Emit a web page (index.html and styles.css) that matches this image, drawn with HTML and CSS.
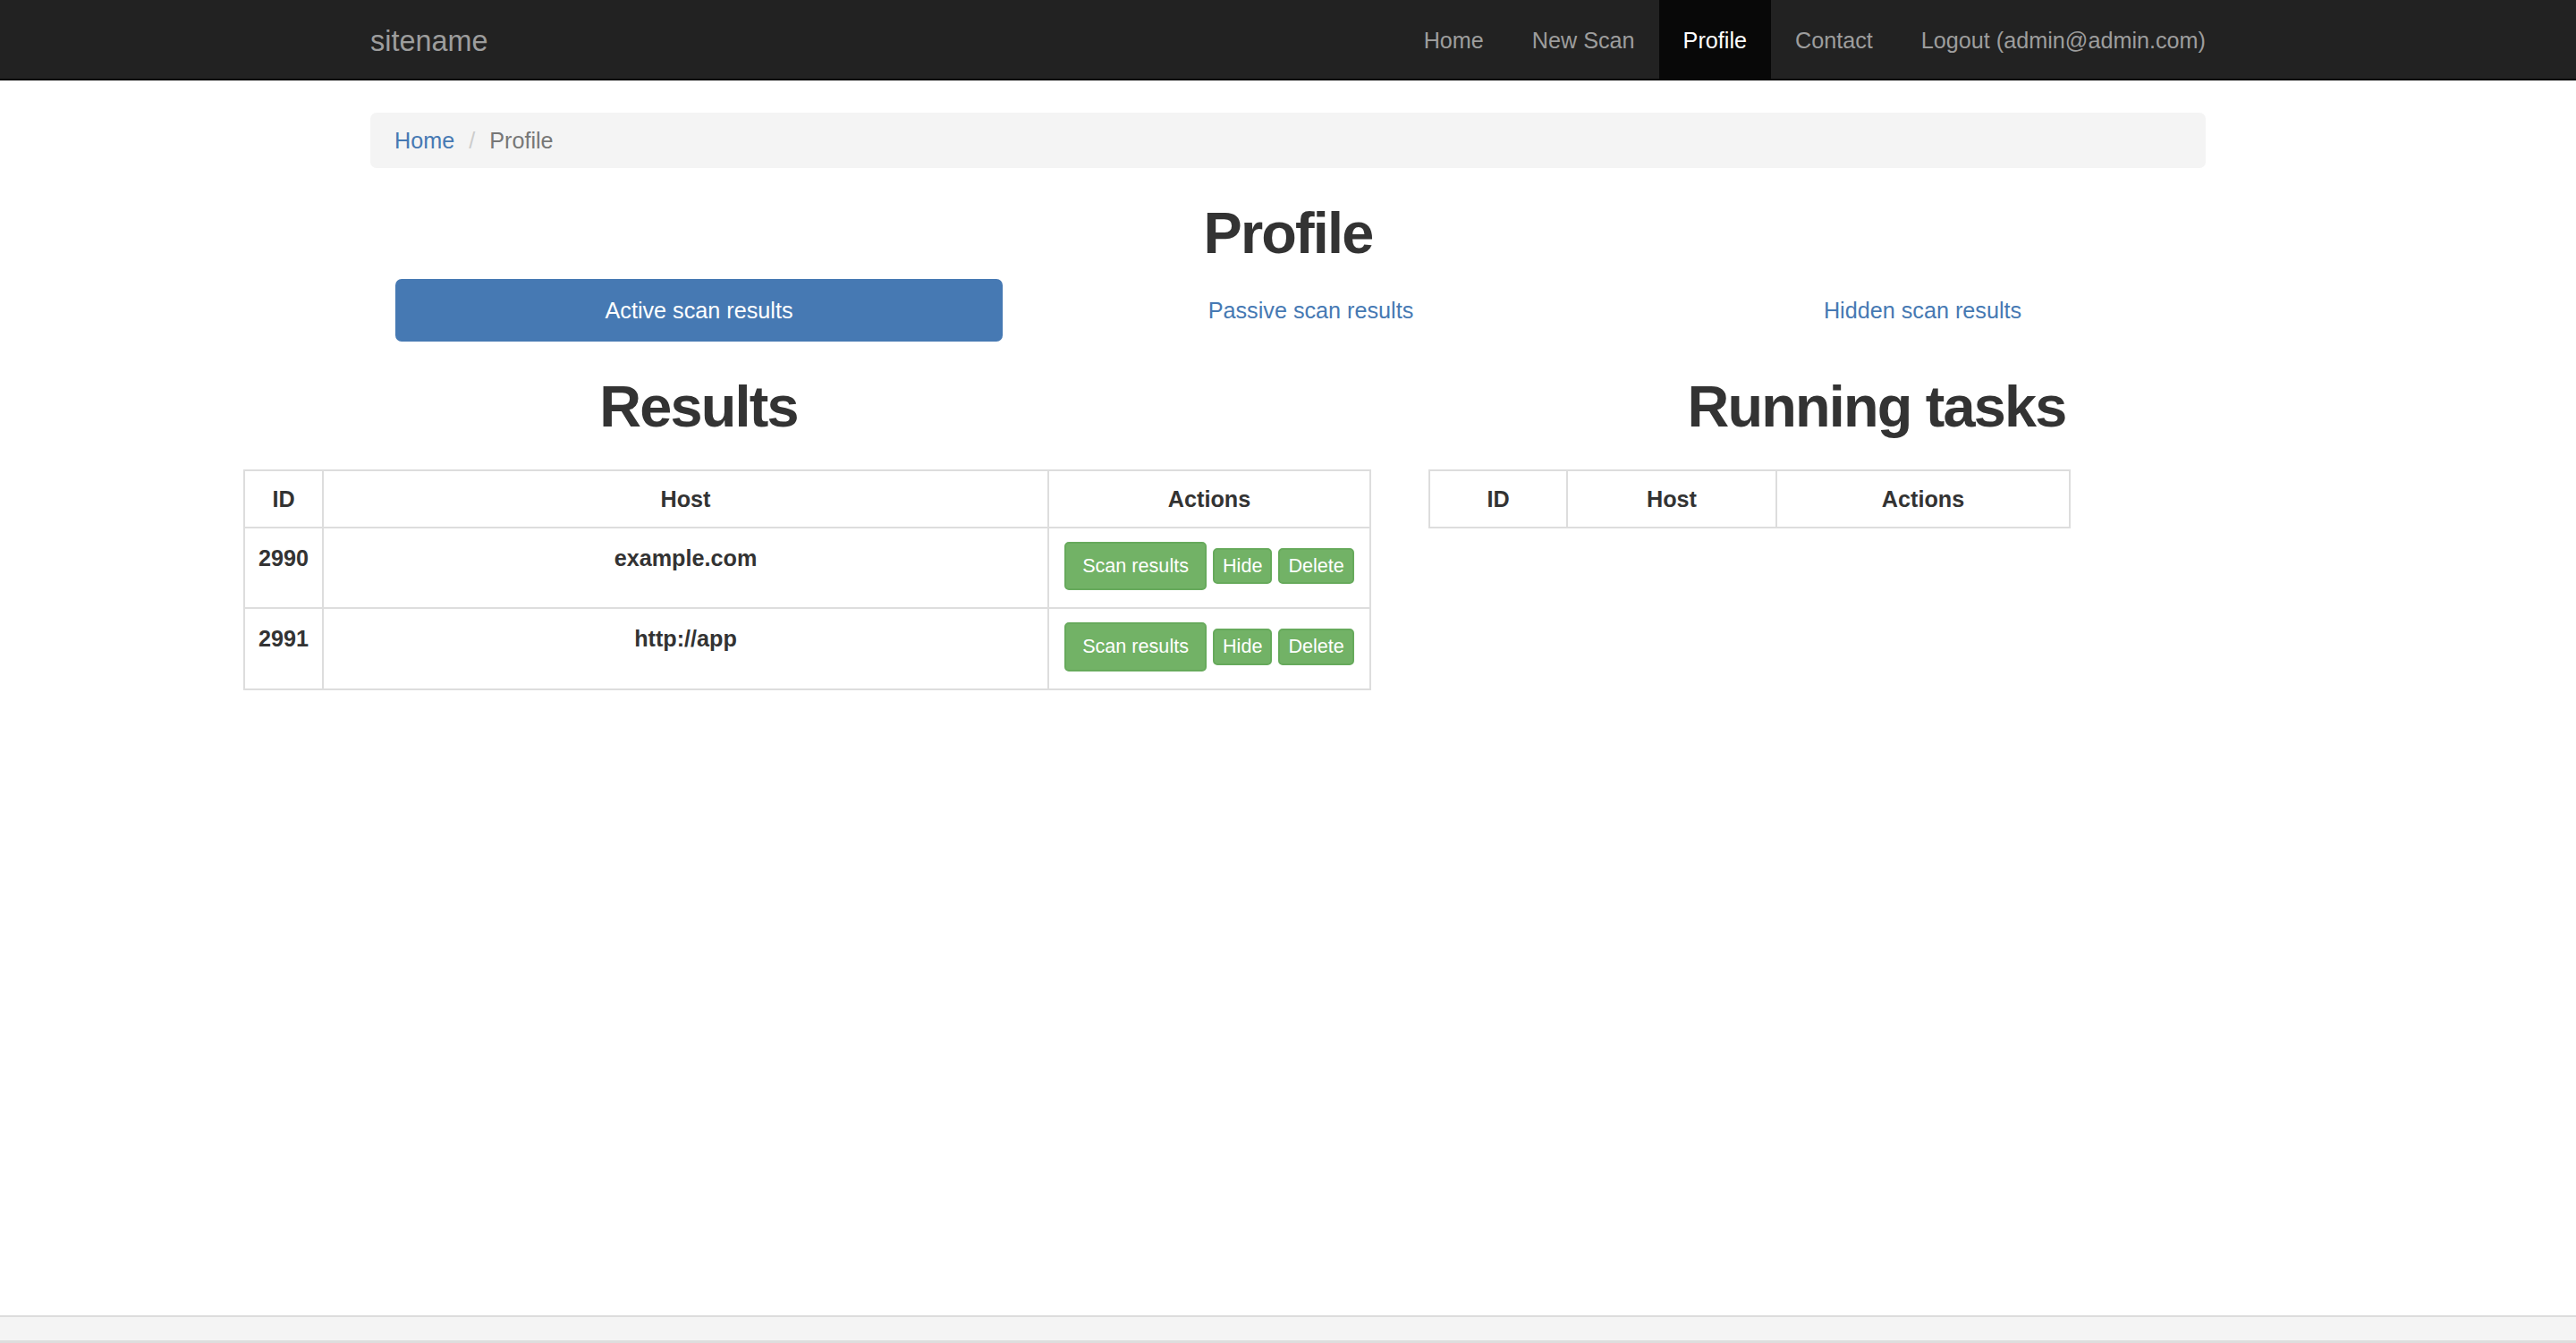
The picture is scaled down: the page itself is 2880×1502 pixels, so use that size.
FILE: index.html
```html
<!DOCTYPE html>
<html lang="en">
<head>
<meta charset="utf-8">
<title>Profile</title>
<link rel="stylesheet" href="styles.css">
</head>
<body>
<nav class="navbar">
  <div class="container nav-inner">
    <a class="brand" href="#">sitename</a>
    <ul class="nav-links">
      <li><a href="#">Home</a></li>
      <li><a href="#">New Scan</a></li>
      <li class="active"><a href="#">Profile</a></li>
      <li><a href="#">Contact</a></li>
      <li><a href="#">Logout (admin@admin.com)</a></li>
    </ul>
  </div>
</nav>
<main class="main">
  <div class="container">
    <ol class="breadcrumb">
      <li><a href="#">Home</a></li>
      <li class="current">Profile</li>
    </ol>
    <h1 class="page-title">Profile</h1>
    <ul class="tabs">
      <li class="active"><a href="#">Active scan results</a></li>
      <li><a href="#">Passive scan results</a></li>
      <li><a href="#">Hidden scan results</a></li>
    </ul>
  </div>
  <div class="panels">
    <section class="panel panel-left">
      <h2 class="panel-title">Results</h2>
      <table class="grid-table results-table">
        <colgroup>
          <col class="r-id"><col class="r-host"><col class="r-actions">
        </colgroup>
        <thead>
          <tr><th>ID</th><th>Host</th><th>Actions</th></tr>
        </thead>
        <tbody>
          <tr>
            <td class="strong">2990</td>
            <td class="strong">example.com</td>
            <td><a class="btn btn-sm" href="#">Scan results</a> <a class="btn btn-xs" href="#">Hide</a> <a class="btn btn-xs" href="#">Delete</a></td>
          </tr>
          <tr>
            <td class="strong">2991</td>
            <td class="strong">http://app</td>
            <td><a class="btn btn-sm" href="#">Scan results</a> <a class="btn btn-xs" href="#">Hide</a> <a class="btn btn-xs" href="#">Delete</a></td>
          </tr>
        </tbody>
      </table>
    </section>
    <section class="panel panel-right">
      <h2 class="panel-title">Running tasks</h2>
      <table class="grid-table tasks-table">
        <colgroup>
          <col class="t-id"><col class="t-host"><col class="t-actions">
        </colgroup>
        <thead>
          <tr><th>ID</th><th>Host</th><th>Actions</th></tr>
        </thead>
      </table>
    </section>
  </div>
</main>
<footer class="footer"></footer>
</body>
</html>
```

FILE: styles.css
```css
html, body {
  margin: 0;
  padding: 0;
}

body {
  min-height: 100vh;
  display: flex;
  flex-direction: column;
  background: #ffffff;
  color: #333333;
  font-family: "Liberation Sans", Arial, Helvetica, sans-serif;
  font-size: 25.2px;
  line-height: 36px;
}

a {
  text-decoration: none;
}

.container {
  box-sizing: border-box;
  width: 2106px;
  margin: 0 auto;
  padding: 0 27px;
}

/* Navbar */
.navbar {
  background: #222222;
  border-bottom: 2px solid #080808;
  height: 88px;
}

.nav-inner {
  display: flex;
  justify-content: space-between;
  height: 88px;
}

.brand {
  display: block;
  margin-left: -27px;
  padding: 28px 27px 24px;
  font-size: 32.4px;
  line-height: 36px;
  color: #9d9d9d;
}

.nav-links {
  display: flex;
  list-style: none;
  margin: 0 -27px 0 0;
  padding: 0;
}

.nav-links a {
  display: block;
  padding: 27px 27px 25px;
  line-height: 36px;
  color: #9d9d9d;
}

.nav-links .active a {
  background: #080808;
  color: #ffffff;
}

/* Main */
.main {
  flex: 1 0 auto;
}

.breadcrumb {
  list-style: none;
  margin: 36px 0 36px;
  padding: 13px 27px;
  background: #f4f4f4;
  border-radius: 7px;
}

.breadcrumb li {
  display: inline;
}

.breadcrumb li + li::before {
  content: "/\00a0";
  padding: 0 9px;
  color: #cccccc;
}

.breadcrumb a {
  color: #4679b3;
}

.breadcrumb .current {
  color: #777777;
}

.page-title {
  margin: 37px 0 16px;
  text-align: center;
  font-size: 64.8px;
  line-height: 71px;
  font-weight: 700;
  letter-spacing: -1.8px;
  color: #333333;
}

.tabs {
  display: grid;
  grid-template-columns: repeat(3, 679px);
  column-gap: 5px;
  list-style: none;
  margin: 0 0 0 28px;
  padding: 0;
}

.tabs a {
  display: block;
  padding: 17px 27px;
  line-height: 36px;
  text-align: center;
  border-radius: 7px;
  color: #4679b3;
}

.tabs .active a {
  background: #4679b3;
  color: #ffffff;
}

/* Panels */
.panels {
  display: grid;
  grid-template-columns: 1072px 1056px;
  column-gap: 253px;
  padding-left: 245px;
}

.panel {
  padding: 0 27px;
}

.panel-title {
  margin: 37px 0 35px;
  text-align: center;
  font-size: 64.8px;
  line-height: 71px;
  font-weight: 700;
  letter-spacing: -1.8px;
  color: #333333;
}

.grid-table {
  border-collapse: collapse;
  table-layout: fixed;
  border: 2px solid #dddddd;
  text-align: center;
}

.results-table {
  width: 1259px;
}

.tasks-table {
  width: 716px;
}

.r-id { width: 88px; }
.r-host { width: 811px; }
.r-actions { width: 360px; }

.t-id { width: 154px; }
.t-host { width: 234px; }
.t-actions { width: 328px; }

.grid-table th,
.grid-table td {
  border: 2px solid #dddddd;
  padding: 13px 14px;
  line-height: 36px;
}

.grid-table th {
  font-weight: 700;
  vertical-align: bottom;
}

.grid-table td {
  vertical-align: top;
  padding-top: 15px;
  padding-bottom: 19px;
}

.grid-table td.strong {
  font-weight: 700;
}

.btn {
  display: inline-block;
  color: #ffffff;
  background: #72b266;
  border: 2px solid #67aa5c;
  font-size: 21.6px;
  line-height: 32.4px;
  white-space: nowrap;
}

.btn-sm {
  padding: 9px 18px;
  border-radius: 5px;
}

.btn-xs {
  padding: 2px 9px;
  border-radius: 5px;
}

/* Footer */
.footer {
  height: 26px;
  background: #f4f4f4;
  border-top: 2px solid #dcdcdc;
  border-bottom: 3px solid #dddddd;
}
```
